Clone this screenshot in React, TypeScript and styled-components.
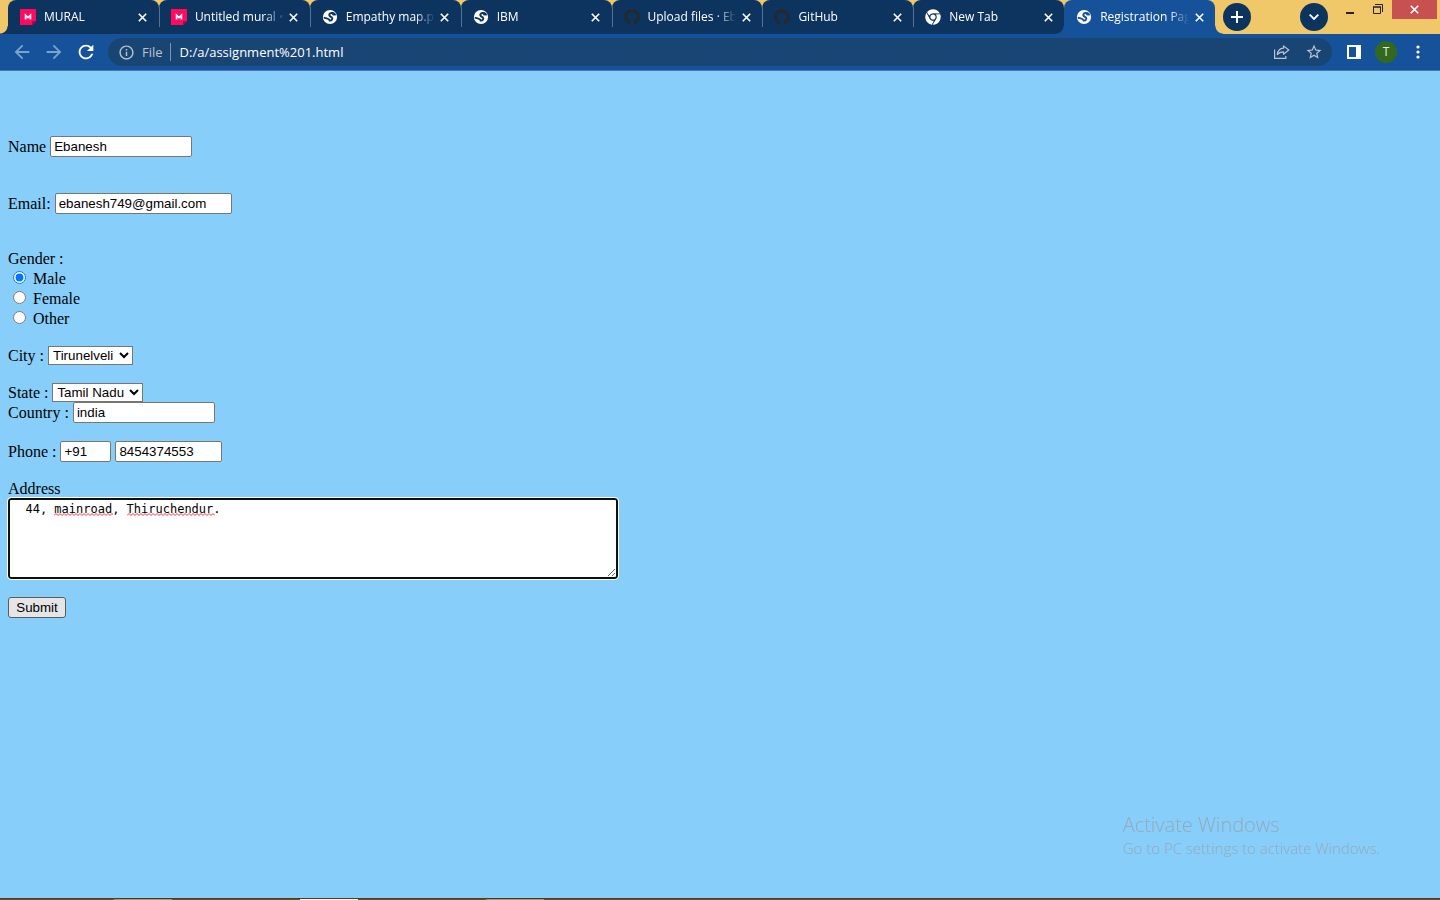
import React from "react";
import styled, { createGlobalStyle, css } from "styled-components";
import { MdArrowBack, MdArrowForward, MdRefresh, MdInfoOutline, MdStarBorder } from "react-icons/md";
import { FaChrome, FaGithub } from "react-icons/fa";

const colors = {
  frame: "#f0c869",
  tab: "#0c345f",
  toolbar: "#155299",
  omnibox: "#194574",
  page: "#87cefa",
};

const GlobalStyle = createGlobalStyle`
  * { box-sizing: border-box; }
  body { margin: 0; background: ${colors.page}; }
  svg { display: block; flex: none; }
`;

const Window = styled.div`
  min-height: 100vh;
  display: flex;
  flex-direction: column;
  background: ${colors.page};
  font-family: "Open Sans", "Noto Sans", sans-serif;
`;

const TabStrip = styled.header`
  display: flex;
  align-items: flex-start;
  height: 34px;
  padding-left: 8px;
  background: ${colors.frame};
`;

const Tabs = styled.div`
  display: flex;
  flex: 0 1 1207px;
  min-width: 0;
`;

const flare = css`
  content: "";
  position: absolute;
  bottom: 0;
  width: 8px;
  height: 8px;
`;

const Tab = styled.div<{ $active?: boolean; $divider?: boolean }>`
  position: relative;
  display: flex;
  align-items: center;
  flex: 1 1 0;
  min-width: 0;
  height: 34px;
  padding: 0 8px 0 12px;
  border-radius: 8px 8px 0 0;
  color: #fff;
  background: ${(p) => (p.$active ? colors.toolbar : colors.tab)};

  &:first-child::before {
    ${flare}
    left: -8px;
    background: radial-gradient(circle at 0 0, transparent 7px, ${colors.tab} 8px);
  }

  ${(p) =>
    p.$divider &&
    css`
      &::after {
        content: "";
        position: absolute;
        right: -1px;
        top: 7px;
        width: 1px;
        height: 20px;
        z-index: 1;
        background: #56728f;
      }
    `}

  ${(p) =>
    p.$active &&
    css`
      &::before {
        ${flare}
        left: -8px;
        background: radial-gradient(circle at 0 0, transparent 7px, ${colors.toolbar} 8px);
      }
      &::after {
        ${flare}
        right: -8px;
        background: radial-gradient(circle at 100% 0, transparent 7px, ${colors.toolbar} 8px);
      }
    `}
`;

const TabTitle = styled.span`
  flex: 1;
  min-width: 0;
  margin: 0 2px 0 8px;
  overflow: hidden;
  white-space: nowrap;
  font-size: 12px;
  line-height: 18px;
  mask-image: linear-gradient(to right, #000 calc(100% - 20px), transparent);
`;

const IconButton = styled.button<{ $size: number; $faded?: boolean }>`
  display: flex;
  align-items: center;
  justify-content: center;
  flex: none;
  width: ${(p) => p.$size}px;
  height: ${(p) => p.$size}px;
  padding: 0;
  border: 0;
  background: none;
  color: ${(p) => (p.$faded ? "#7da3cc" : "#fff")};
`;

const RoundButton = styled(IconButton)`
  border-radius: 50%;
  background: ${colors.tab};
  margin: 3px 8px 0;
`;

const WindowControls = styled.div`
  display: flex;
  margin-left: auto;
  padding-right: 3px;
`;

const CaptionButton = styled.button<{ $close?: boolean }>`
  display: flex;
  align-items: center;
  justify-content: center;
  width: ${(p) => (p.$close ? 45 : 28)}px;
  height: 19px;
  padding: 0;
  border: 0;
  color: ${(p) => (p.$close ? "#fff" : "#222")};
  background: ${(p) => (p.$close ? "#c75050" : "none")};
`;

const Toolbar = styled.nav`
  display: flex;
  align-items: center;
  height: 37px;
  padding: 0 8px;
  border-bottom: 1px solid #4479ad;
  background: ${colors.toolbar};
`;

const Navigation = styled.div`
  display: flex;
  gap: 4px;
  margin-right: 8px;
`;

const Omnibox = styled.div`
  display: flex;
  align-items: center;
  flex: 1;
  min-width: 0;
  height: 28px;
  padding: 0 4px 0 10px;
  border-radius: 14px;
  background: ${colors.omnibox};
  color: #b8c4d1;
  font-size: 13px;
  line-height: 20px;
`;

const Scheme = styled.span`
  margin-left: 7px;
  padding-right: 7px;
  line-height: 18px;
  border-right: 1px solid #7c93ad;
`;

const UrlInput = styled.input`
  flex: 1;
  min-width: 0;
  padding: 0 0 0 9px;
  border: 0;
  outline: 0;
  background: none;
  color: #fff;
  font: inherit;
`;

const PageActions = styled.div`
  display: flex;
  gap: 4px;
`;

const Extras = styled.div`
  display: flex;
  align-items: center;
  margin-left: 8px;
  gap: 4px;
`;

const Avatar = styled.button`
  width: 22px;
  height: 22px;
  margin: 0 3px;
  padding: 0;
  border: 0;
  border-radius: 50%;
  background: #33691e;
  color: #e3ecdf;
  font: 12px/22px "Open Sans", sans-serif;
`;

const Page = styled.main`
  flex: 1;
  padding: 65px 8px 40px;
`;

const Form = styled.form`
  color: #000;
  font-family: "Liberation Serif", "Times New Roman", serif;
  font-size: 16px;
  line-height: 20px;
`;

const Row = styled.div<{ $after?: number }>`
  display: flex;
  align-items: center;
  gap: 4px;
  line-height: 18px;
  margin-bottom: ${(p) => p.$after ?? 18}px;
`;

const Genders = styled.fieldset`
  margin: 0 0 17px;
  padding: 0;
  border: 0;
`;

const Legend = styled.legend`
  padding: 0;
`;

const Option = styled.label`
  display: flex;
  align-items: center;
  gap: 7px;
  height: 20px;
`;

const Radio = styled.input`
  width: 13px;
  height: 13px;
  margin: 0 0 3px 5px;
`;

const control = css`
  border: 1px solid #767676;
  border-radius: 2px;
  background: #fff;
  color: #000;
  font-family: "Liberation Sans", Arial, sans-serif;
`;

const TextBox = styled.input<{ $width: number }>`
  ${control}
  width: ${(p) => p.$width}px;
  height: 21px;
  padding: 0 3px;
`;

const Select = styled.select<{ $width: number }>`
  ${control}
  border-radius: 0;
  width: ${(p) => p.$width}px;
  height: 19px;
`;

const AddressLabel = styled.label`
  display: block;
  line-height: 18px;
`;

const AddressBox = styled.div`
  position: relative;
  width: 610px;
  max-width: 100%;
  height: 81px;
  margin-bottom: 18px;
`;

const TextArea = styled.textarea`
  display: block;
  width: 100%;
  height: 100%;
  padding: 2px 1px;
  border: 2px solid #101010;
  border-radius: 3px;
  outline: 1px solid #fff;
  background: #fff;
  color: #000;
  font-family: "DejaVu Sans Mono", monospace;
  font-size: 12px;
  line-height: 15px;
`;

const SpellingMarks = styled.div`
  position: absolute;
  top: 15px;
  left: 46px;
  display: flex;
  gap: 14px;
  pointer-events: none;
`;

const SubmitButton = styled.button`
  display: block;
  width: 58px;
  height: 21px;
  padding: 0;
  border: 1px solid #5c5c5c;
  border-radius: 3px;
  background: #e5e5e5;
  color: #000;
  font-family: "Liberation Sans", Arial, sans-serif;
`;

const Watermark = styled.aside`
  position: fixed;
  right: 60px;
  bottom: 41px;
  color: #94a9b9;
  font-weight: 300;
  pointer-events: none;
`;

const WatermarkTitle = styled.p`
  margin: 0;
  font-size: 20px;
  line-height: 24px;
`;

const WatermarkText = styled.p`
  margin: 0;
  font-size: 15px;
  line-height: 22px;
`;

const Taskbar = styled.footer`
  display: flex;
  gap: 128px;
  height: 2px;
  padding-left: 114px;
  border-top: 1px solid #4c3c22;
  background: #66522a;
`;

const TaskItem = styled.span<{ $active?: boolean }>`
  width: 58px;
  height: 1px;
  background: ${(p) => (p.$active ? "#fff4ea" : "#a5957c")};
`;

const CloseIcon = () => (
  <svg width="9" height="9" viewBox="0 0 9 9" stroke="currentColor" strokeWidth="1.6">
    <path d="M.8.8l7.4 7.4M8.2.8L.8 8.2" />
  </svg>
);

const MuralIcon = () => (
  <svg width="16" height="16" viewBox="0 0 16 16">
    <path d="M0 0h16v12l-4 4H0z" fill="#ff0a5f" />
    <path d="M16 12l-4 4v-3q0-1 1-1z" fill="#a8094f" />
    <path d="M5.600 10.500V6.200L8 8.600l2.400-2.400v4.300" fill="none" stroke="#fff" strokeWidth="1.700" />
  </svg>
);

const GlobeIcon = ({ cut }: { cut: string }) => (
  <svg width="16" height="16" viewBox="0 0 16 16">
    <circle cx="8" cy="8" r="7.1" fill="#fff" />
    <path
      d="M13 5.400C11.500 3.600 8.200 3.400 7.400 5.200 6.700 7.200 8.500 7.500 9.700 8.300 11.200 9.600 9.800 12 7.600 11.600 7.800 9.700 5.500 9.500 2.600 8.800"
      fill="none"
      stroke={cut}
      strokeWidth="1.900"
      strokeLinecap="round"
      strokeLinejoin="round"
    />
    <path d="M8.600 3.200l3.600.300 1.300 2.700-2.700.300z" fill={cut} />
  </svg>
);

type TabInfo = { title: string; icon: React.ReactNode; active?: boolean };

const tabs: TabInfo[] = [
  { title: "MURAL", icon: <MuralIcon /> },
  { title: "Untitled mural •", icon: <MuralIcon /> },
  { title: "Empathy map.pd", icon: <GlobeIcon cut={colors.tab} /> },
  { title: "IBM", icon: <GlobeIcon cut={colors.tab} /> },
  { title: "Upload files · Eba", icon: <FaGithub size={16} color="#24292e" /> },
  { title: "GitHub", icon: <FaGithub size={16} color="#24292e" /> },
  { title: "New Tab", icon: <FaChrome size={16} /> },
  { title: "Registration Pag", icon: <GlobeIcon cut={colors.toolbar} />, active: true },
];

const BrowserTabs = () => (
  <TabStrip>
    <Tabs>
      {tabs.map((tab, i) => (
        <Tab key={tab.title} $active={tab.active} $divider={i < tabs.length - 2}>
          {tab.icon}
          <TabTitle>{tab.title}</TabTitle>
          <IconButton $size={16} aria-label={`Close ${tab.title}`}>
            <CloseIcon />
          </IconButton>
        </Tab>
      ))}
    </Tabs>
    <RoundButton $size={28} aria-label="New tab">
      <svg width="12" height="12" viewBox="0 0 12 12" stroke="currentColor" strokeWidth="2">
        <path d="M6 0v12M0 6h12" />
      </svg>
    </RoundButton>
    <WindowControls>
      <RoundButton $size={28} aria-label="Search tabs">
        <svg width="10" height="6" viewBox="0 0 10 6" fill="none" stroke="currentColor" strokeWidth="1.8">
          <path d="M.7.7L5 5 9.300.7" />
        </svg>
      </RoundButton>
      <CaptionButton aria-label="Minimize">
        <svg width="8" height="10" viewBox="0 0 8 10">
          <path d="M0 7h8v2H0z" fill="currentColor" />
        </svg>
      </CaptionButton>
      <CaptionButton aria-label="Restore">
        <svg width="10" height="11" viewBox="0 0 10 11" fill="none" stroke="currentColor">
          <path d="M.5 3v6.500h7V3M2 .500h7.500V8" />
          <path d="M0 3h8" strokeWidth="1.500" />
        </svg>
      </CaptionButton>
      <CaptionButton $close aria-label="Close">
        <CloseIcon />
      </CaptionButton>
    </WindowControls>
  </TabStrip>
);

const AddressBar = () => (
  <Toolbar>
    <Navigation>
      <IconButton $size={28} $faded aria-label="Back">
        <MdArrowBack size={22} />
      </IconButton>
      <IconButton $size={28} $faded aria-label="Forward">
        <MdArrowForward size={22} />
      </IconButton>
      <IconButton $size={28} aria-label="Reload">
        <MdRefresh size={22} />
      </IconButton>
    </Navigation>
    <Omnibox>
      <MdInfoOutline size={17} />
      <Scheme>File</Scheme>
      <UrlInput aria-label="Address" defaultValue="D:/a/assignment%201.html" />
      <PageActions>
        <IconButton $size={28} aria-label="Share">
          <svg width="16" height="14" viewBox="0 0 16 14" fill="none" stroke="#b8c4d1" strokeWidth="1.2">
            <path d="M.6 4.500v8.900h11.200v-2.500" />
            <path
              d="M9.500.9L14.800 5 9.500 9.200V6.800C6.500 6.700 4.800 7.600 3.300 9.600 3.700 6 5.700 3.500 9.500 3.200z"
              strokeLinejoin="round"
            />
          </svg>
        </IconButton>
        <IconButton $size={28} aria-label="Bookmark">
          <MdStarBorder size={18} color="#b8c4d1" />
        </IconButton>
      </PageActions>
    </Omnibox>
    <Extras>
      <IconButton $size={28} aria-label="Side panel">
        <svg width="14" height="14" viewBox="0 0 14 14">
          <path d="M0 0h14v14H0zM2 2v10h7V2z" fill="currentColor" fillRule="evenodd" />
        </svg>
      </IconButton>
      <Avatar aria-label="Profile">T</Avatar>
      <IconButton $size={28} aria-label="Menu">
        <svg width="4" height="14" viewBox="0 0 4 14" fill="currentColor">
          <circle cx="2" cy="2" r="1.6" />
          <circle cx="2" cy="7" r="1.6" />
          <circle cx="2" cy="12" r="1.6" />
        </svg>
      </IconButton>
    </Extras>
  </Toolbar>
);

const Squiggle = ({ width }: { width: number }) => (
  <svg width={width} height="3" fill="none" stroke="#f0363c">
    <path d={"M0 2.5" + "l2-2l2 2".repeat(Math.ceil(width / 4))} />
  </svg>
);

const RegistrationForm = () => (
  <Form onSubmit={(e) => e.preventDefault()}>
    <Row $after={36}>
      <label htmlFor="name">Name</label>
      <TextBox id="name" $width={142} defaultValue="Ebanesh" />
    </Row>
    <Row $after={35}>
      <label htmlFor="email">Email:</label>
      <TextBox id="email" type="email" $width={177} defaultValue="ebanesh749@gmail.com" />
    </Row>
    <Genders>
      <Legend>Gender :</Legend>
      {["Male", "Female", "Other"].map((g) => (
        <Option key={g}>
          <Radio type="radio" name="gender" value={g} defaultChecked={g === "Male"} />
          {g}
        </Option>
      ))}
    </Genders>
    <Row>
      <label htmlFor="city">City :</label>
      <Select id="city" $width={85}>
        <option>Tirunelveli</option>
      </Select>
    </Row>
    <Row $after={0}>
      <label htmlFor="state">State :</label>
      <Select id="state" $width={91}>
        <option>Tamil Nadu</option>
      </Select>
    </Row>
    <Row>
      <label htmlFor="country">Country :</label>
      <TextBox id="country" $width={142} defaultValue="india" />
    </Row>
    <Row>
      <label htmlFor="phone">Phone :</label>
      <TextBox aria-label="Country code" $width={51} defaultValue="+91" />
      <TextBox id="phone" type="tel" $width={107} defaultValue="8454374553" />
    </Row>
    <AddressLabel htmlFor="address">Address</AddressLabel>
    <AddressBox>
      <TextArea id="address" spellCheck={false} defaultValue="  44, mainroad, Thiruchendur." />
      <SpellingMarks aria-hidden="true">
        <Squiggle width={59} />
        <Squiggle width={88} />
      </SpellingMarks>
    </AddressBox>
    <SubmitButton type="submit">Submit</SubmitButton>
  </Form>
);

export default function App() {
  return (
    <Window>
      <GlobalStyle />
      <BrowserTabs />
      <AddressBar />
      <Page>
        <RegistrationForm />
      </Page>
      <Watermark>
        <WatermarkTitle>Activate Windows</WatermarkTitle>
        <WatermarkText>Go to PC settings to activate Windows.</WatermarkText>
      </Watermark>
      <Taskbar>
        <TaskItem />
        <TaskItem $active />
        <TaskItem />
      </Taskbar>
    </Window>
  );
}
